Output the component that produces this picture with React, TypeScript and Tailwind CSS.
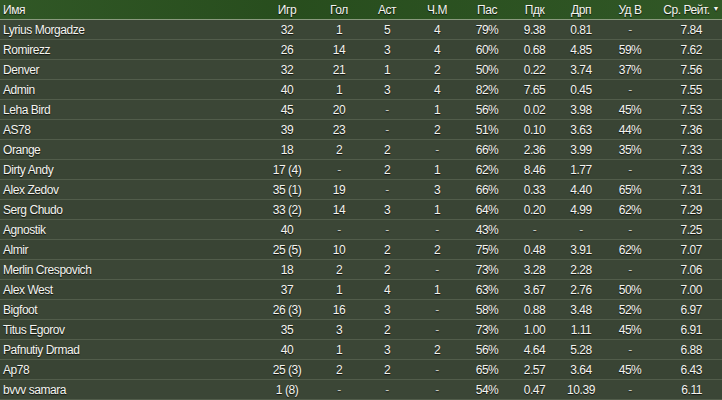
import { ReactNode } from 'react';

type Row = [string, string, string, string, string, string, string, string, string, string];

const rows: Row[] = [
  ['Lyrius Morgadze', '32', '1', '5', '4', '79%', '9.38', '0.81', '-', '7.84'],
  ['Romirezz', '26', '14', '3', '4', '60%', '0.68', '4.85', '59%', '7.62'],
  ['Denver', '32', '21', '1', '2', '50%', '0.22', '3.74', '37%', '7.56'],
  ['Admin', '40', '1', '3', '4', '82%', '7.65', '0.45', '-', '7.55'],
  ['Leha Bird', '45', '20', '-', '1', '56%', '0.02', '3.98', '45%', '7.53'],
  ['AS78', '39', '23', '-', '2', '51%', '0.10', '3.63', '44%', '7.36'],
  ['Orange', '18', '2', '2', '-', '66%', '2.36', '3.99', '35%', '7.33'],
  ['Dirty Andy', '17 (4)', '-', '2', '1', '62%', '8.46', '1.77', '-', '7.33'],
  ['Alex Zedov', '35 (1)', '19', '-', '3', '66%', '0.33', '4.40', '65%', '7.31'],
  ['Serg Chudo', '33 (2)', '14', '3', '1', '64%', '0.20', '4.99', '62%', '7.29'],
  ['Agnostik', '40', '-', '-', '-', '43%', '-', '-', '-', '7.25'],
  ['Almir', '25 (5)', '10', '2', '2', '75%', '0.48', '3.91', '62%', '7.07'],
  ['Merlin Crespovich', '18', '2', '2', '-', '73%', '3.28', '2.28', '-', '7.06'],
  ['Alex West', '37', '1', '4', '1', '63%', '3.67', '2.76', '50%', '7.00'],
  ['Bigfoot', '26 (3)', '16', '3', '-', '58%', '0.88', '3.48', '52%', '6.97'],
  ['Titus Egorov', '35', '3', '2', '-', '73%', '1.00', '1.11', '45%', '6.91'],
  ['Pafnutiy Drmad', '40', '1', '3', '2', '56%', '4.64', '5.28', '-', '6.88'],
  ['Ap78', '25 (3)', '2', '2', '-', '65%', '2.57', '3.64', '45%', '6.43'],
  ['bvvv samara', '1 (8)', '-', '-', '-', '54%', '0.47', '10.39', '-', '6.11'],
];

// column widths, tuned so centres line up with the screenshot
const cols = [
  'w-[261px] pl-[3px] text-left',
  'w-[52px] text-center',
  'w-[52px] text-center',
  'w-[44px] text-center',
  'w-[56px] text-center',
  'w-[44px] text-center',
  'w-[51px] text-center',
  'w-[42px] text-center',
  'w-[56px] text-center',
  'flex-1 text-right',
];

const headers = ['Имя', 'Игр', 'Гол', 'Аст', 'Ч.М', 'Пас', 'Пдк', 'Дрп', 'Уд В'];

function Cell({ i, children }: { i: number; children: ReactNode }) {
  return <div className={`${cols[i]} shrink-0 truncate`}>{children}</div>;
}

export default function App() {
  return (
    <div
      className="w-[722px] h-[400px] overflow-hidden bg-[#3a4535] text-[12px] tracking-[-0.45px] text-[#f4f4f0] [text-shadow:0_1px_1px_rgba(0,0,0,0.75)]"
      style={{ fontFamily: '"Liberation Sans", Arial, sans-serif' }}
    >
      {/* HEADER */}
      <div className="h-[20px] flex items-center bg-[#2a521f] border-b border-[#8a9a7e] bg-[linear-gradient(90deg,rgba(255,255,255,0.03)_0%,rgba(0,0,0,0.06)_40%,rgba(255,255,255,0.03)_100%)]">
        {headers.map((h, i) => (
          <Cell key={h} i={i}>
            {h}
          </Cell>
        ))}
        <div className="flex-1 flex items-center justify-end pr-[3px] gap-[3px]">
          <span>Ср. Рейт.</span>
          <span className="text-[7px]">▼</span>
        </div>
      </div>

      {/* ROWS */}
      {rows.map((r, ri) => (
        <div
          key={ri}
          className={`h-[20px] flex items-center border-b border-[#525d4b] ${
            ri % 2 === 0 ? 'bg-[#3b4636]' : 'bg-[#394434]'
          }`}
        >
          {r.map((v, i) =>
            i === 9 ? (
              <div key={i} className="flex-1 text-right pr-[20px]">
                {v}
              </div>
            ) : (
              <Cell key={i} i={i}>
                {v === '-' ? <span className="text-[#c8ccc4]">-</span> : v}
              </Cell>
            )
          )}
        </div>
      ))}
    </div>
  );
}
